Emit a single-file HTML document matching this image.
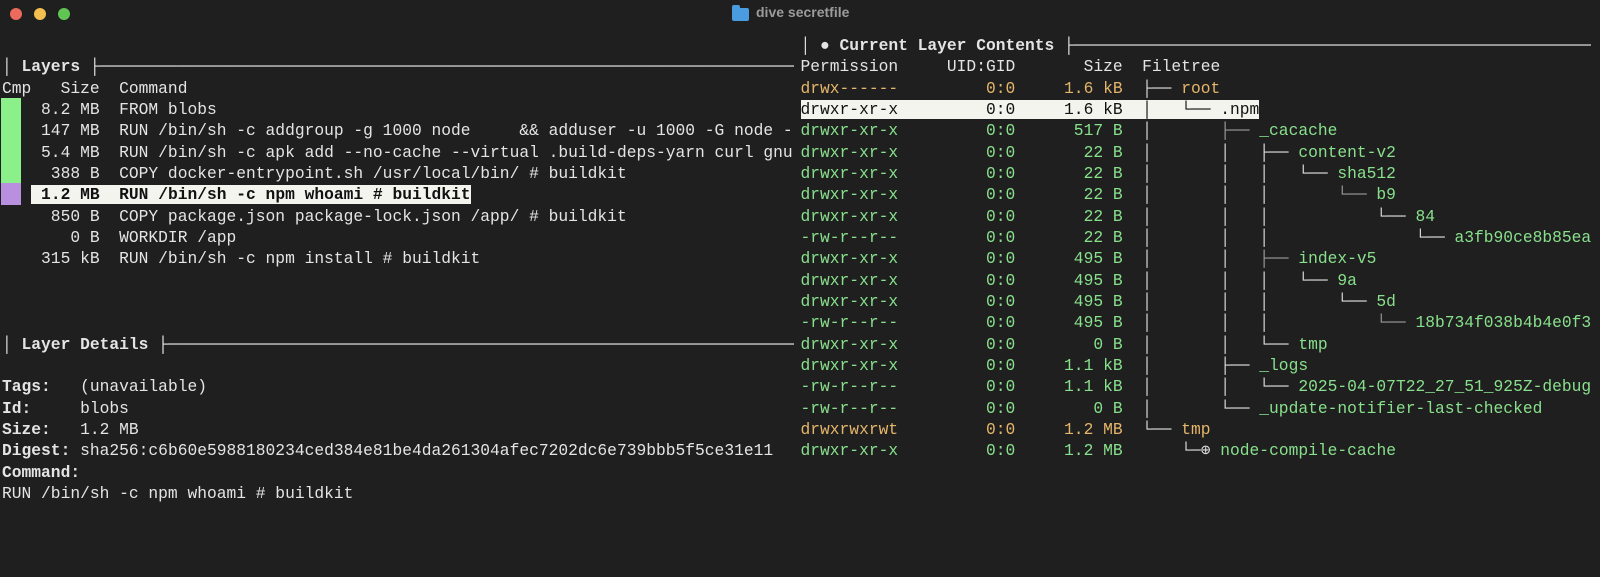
<!DOCTYPE html>
<html><head><meta charset="utf-8">
<style>
html,body{margin:0;padding:0;background:#1f1f1f;width:1600px;height:577px;overflow:hidden;}
.dot{position:absolute;top:8px;width:12px;height:12px;border-radius:50%;}
.title{position:absolute;left:756px;top:4px;font:bold 14px "Liberation Sans",sans-serif;color:#9b9b9b;}
.folder{position:absolute;left:732px;top:8px;width:17px;height:13px;background:#4a9be0;border-radius:2px;}
.folder:before{content:"";position:absolute;left:0;top:-3px;width:8px;height:4px;background:#4a9be0;border-radius:2px 2px 0 0;}
pre{position:absolute;margin:0;font-family:"Liberation Mono","DejaVu Sans Mono",monospace;font-size:16.27px;line-height:21.35px;color:#e4e4e4;white-space:pre;overflow:hidden;}
b{font-weight:bold;}
.g{color:#88e08c}.o{color:#e5b56a}.t{color:#dcdcdc}.d{color:#9a9a9a}
.hl{background:#f4f4ee;color:#111;font-weight:bold;}
.hr{background:#f4f4ee;color:#111;}
.bar{position:absolute;left:1px;width:20px;}
</style></head><body>
<div class="dot" style="left:10px;background:#ec6a5e"></div>
<div class="dot" style="left:34px;background:#f4bf4f"></div>
<div class="dot" style="left:58px;background:#61c554"></div>
<div class="folder"></div>
<div class="title">dive secretfile</div>

<div class="bar" style="top:98px;height:85.4px;background:#8cf08a"></div>
<div class="bar" style="top:183.4px;height:21.35px;background:#b98fe0"></div>

<pre style="left:2px;top:34.9px;width:792px;">

<b>│ Layers ├────────────────────────────────────────────────────────────────────────</b>
Cmp   Size  Command
    8.2 MB  FROM blobs
    147 MB  RUN /bin/sh -c addgroup -g 1000 node     &amp;&amp; adduser -u 1000 -G node -
    5.4 MB  RUN /bin/sh -c apk add --no-cache --virtual .build-deps-yarn curl gnu
     388 B  COPY docker-entrypoint.sh /usr/local/bin/ # buildkit
   <span class="hl"> 1.2 MB  RUN /bin/sh -c npm whoami # buildkit</span>
     850 B  COPY package.json package-lock.json /app/ # buildkit
       0 B  WORKDIR /app
    315 kB  RUN /bin/sh -c npm install # buildkit



<b>│ Layer Details ├─────────────────────────────────────────────────────────────────</b>

<b>Tags:</b>   (unavailable)
<b>Id:</b>     blobs
<b>Size:</b>   1.2 MB
<b>Digest:</b> sha256:c6b60e5988180234ced384e81be4da261304afec7202dc6e739bbb5f5ce31e11
<b>Command:</b>
RUN /bin/sh -c npm whoami # buildkit
</pre>

<pre style="left:800.5px;top:34.9px;width:790px;">
<b>│ ● Current Layer Contents ├───────────────────────────────────────────────────────</b>
Permission     UID:GID       Size  Filetree
<span class="o">drwx------         0:0     1.6 kB  </span><span class="t">├── </span><span class="o">root</span>
<span class="hr">drwxr-xr-x         0:0     1.6 kB  │   └── .npm</span>
<span class="g">drwxr-xr-x         0:0      517 B  </span><span class="t">│       </span><span class="d">├── </span><span class="g">_cacache</span>
<span class="g">drwxr-xr-x         0:0       22 B  </span><span class="t">│       │   ├── </span><span class="g">content-v2</span>
<span class="g">drwxr-xr-x         0:0       22 B  </span><span class="t">│       │   │   └── </span><span class="g">sha512</span>
<span class="g">drwxr-xr-x         0:0       22 B  </span><span class="t">│       │   │       </span><span class="d">└── </span><span class="g">b9</span>
<span class="g">drwxr-xr-x         0:0       22 B  </span><span class="t">│       │   │           └── </span><span class="g">84</span>
<span class="g">-rw-r--r--         0:0       22 B  </span><span class="t">│       │   │               └── </span><span class="g">a3fb90ce8b85ea</span>
<span class="g">drwxr-xr-x         0:0      495 B  </span><span class="t">│       │   </span><span class="d">├── </span><span class="g">index-v5</span>
<span class="g">drwxr-xr-x         0:0      495 B  </span><span class="t">│       │   │   └── </span><span class="g">9a</span>
<span class="g">drwxr-xr-x         0:0      495 B  </span><span class="t">│       │   │       └── </span><span class="g">5d</span>
<span class="g">-rw-r--r--         0:0      495 B  </span><span class="t">│       │   │           </span><span class="d">└── </span><span class="g">18b734f038b4b4e0f3</span>
<span class="g">drwxr-xr-x         0:0        0 B  </span><span class="t">│       │   └── </span><span class="g">tmp</span>
<span class="g">drwxr-xr-x         0:0     1.1 kB  </span><span class="t">│       ├── </span><span class="g">_logs</span>
<span class="g">-rw-r--r--         0:0     1.1 kB  </span><span class="t">│       │   └── </span><span class="g">2025-04-07T22_27_51_925Z-debug</span>
<span class="g">-rw-r--r--         0:0        0 B  </span><span class="t">│       └── </span><span class="g">_update-notifier-last-checked</span>
<span class="o">drwxrwxrwt         0:0     1.2 MB  </span><span class="t">└── </span><span class="o">tmp</span>
<span class="g">drwxr-xr-x         0:0     1.2 MB  </span><span class="t">    └─⊕ </span><span class="g">node-compile-cache</span>
</pre>
</body></html>
